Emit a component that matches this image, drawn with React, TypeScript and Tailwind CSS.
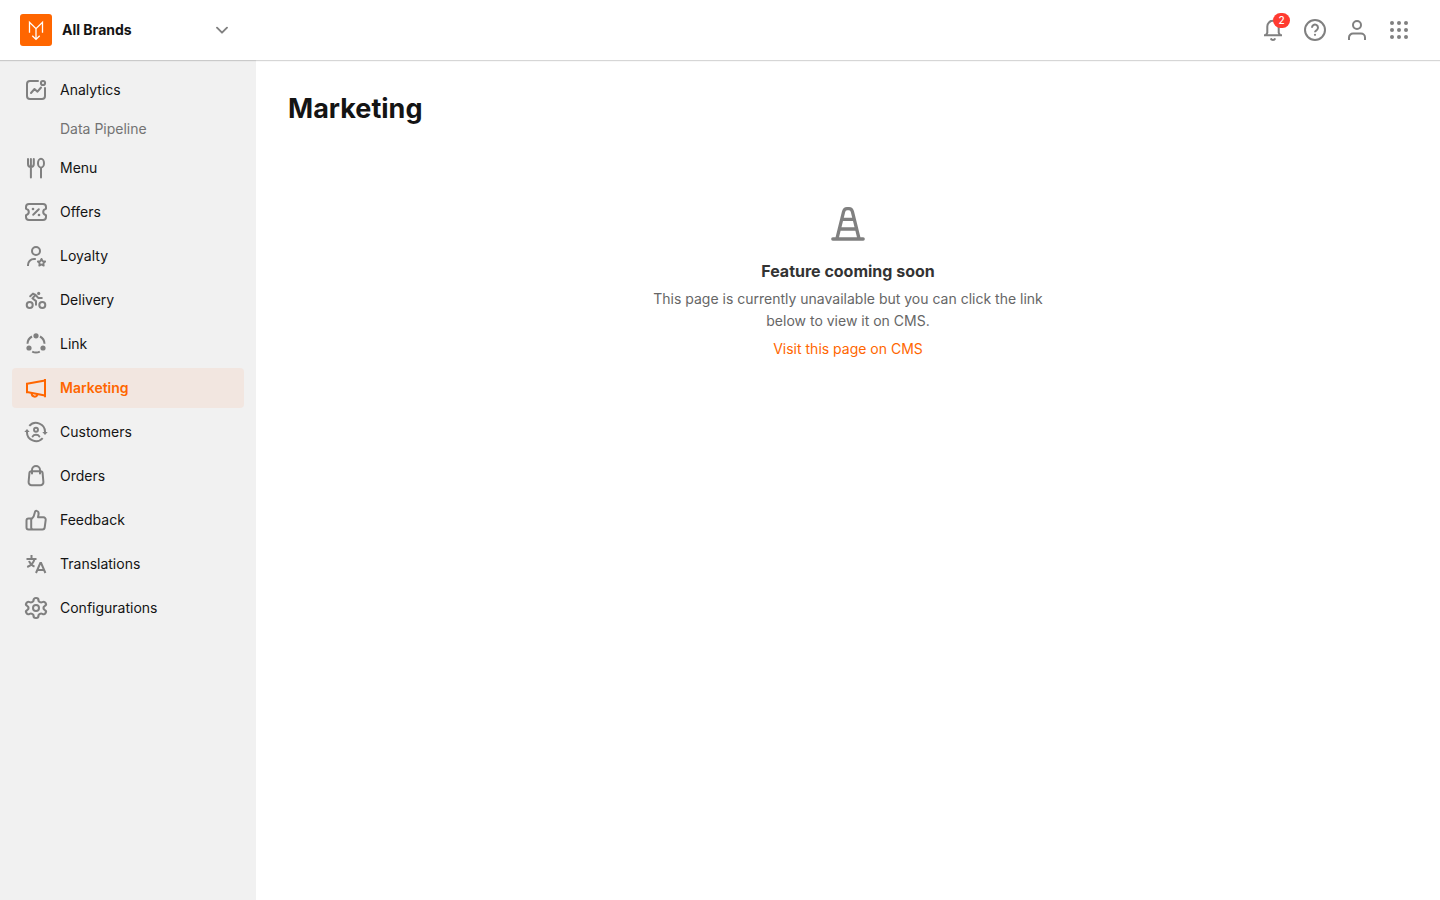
import type { ReactNode } from "react";

function Icon({ children, className = "size-6" }: { children: ReactNode; className?: string }) {
  return (
    <svg
      viewBox="0 0 24 24"
      fill="none"
      stroke="currentColor"
      strokeWidth="2"
      strokeLinecap="round"
      strokeLinejoin="round"
      aria-hidden="true"
      className={`shrink-0 ${className}`}
    >
      {children}
    </svg>
  );
}

type NavItem = { label: string; icon: ReactNode; active?: boolean; children?: string[] };

const NAV: NavItem[] = [
  {
    label: "Analytics",
    children: ["Data Pipeline"],
    icon: (
      <>
        <path d="M14 3H6a3 3 0 0 0-3 3v12a3 3 0 0 0 3 3h12a3 3 0 0 0 3-3v-8" />
        <circle cx="19" cy="5" r="2.1" />
        <path d="m7 15 3.5-4 3 2.7L17 9.5" />
      </>
    ),
  },
  {
    label: "Menu",
    icon: (
      <>
        <path d="M4 3v5a2.9 2.9 0 0 0 5.8 0V3M6.9 3v18.5" />
        <ellipse cx="17" cy="7.2" rx="3" ry="4.4" />
        <path d="M17 12v9.5" />
      </>
    ),
  },
  {
    label: "Offers",
    icon: (
      <>
        <path d="M5 4h14a3 3 0 0 1 3 3v1.8c-2 .6-2.8 1.8-2.8 3.2s.8 2.6 2.8 3.2V17a3 3 0 0 1-3 3H5a3 3 0 0 1-3-3v-1.8c2-.6 2.8-1.8 2.8-3.2S4 9.4 2 8.8V7a3 3 0 0 1 3-3Z" />
        <path d="m9.2 14.8 5.6-5.6" />
        <circle cx="9" cy="9" r="1.3" fill="currentColor" stroke="none" />
        <circle cx="15" cy="15" r="1.3" fill="currentColor" stroke="none" />
      </>
    ),
  },
  {
    label: "Loyalty",
    icon: (
      <>
        <circle cx="12" cy="7" r="4" />
        <path strokeLinecap="butt" d="M4 22v-1a6 6 0 0 1 6-6h1.8" />
        <path
          strokeWidth="1.9"
          d="m17.5 14.9 1.1 2.2 2.5.4-1.8 1.7.4 2.4-2.2-1.1-2.2 1.1.4-2.4-1.8-1.7 2.5-.4Z"
        />
      </>
    ),
  },
  {
    label: "Delivery",
    icon: (
      <>
        <circle cx="5.7" cy="17" r="3" />
        <circle cx="18.3" cy="17" r="3" />
        <circle cx="14.7" cy="5.4" r="1.6" fill="currentColor" stroke="none" />
        <path d="M6.2 8.3 9 5.6l2.6 1.2-3.2 3.5 3.6 2.8v3.6M11.8 7.2l2.7 2.9h3.3" />
      </>
    ),
  },
  {
    label: "Link",
    icon: (
      <>
        <circle cx="12" cy="3.8" r="2.6" fill="currentColor" stroke="none" />
        <circle cx="5" cy="16" r="2.6" fill="currentColor" stroke="none" />
        <circle cx="19" cy="16" r="2.6" fill="currentColor" stroke="none" />
        <path
          strokeLinecap="butt"
          d="M3.5 11.8A8.5 8.5 0 0 1 8 4.500M16 4.500a8.5 8.5 0 0 1 4.500 7.300M8.200 19.600a8.500 8.500 0 0 0 7.600 0"
        />
      </>
    ),
  },
  {
    label: "Marketing",
    active: true,
    icon: (
      <>
        <path strokeLinecap="butt" d="M3 6.7v10.6M21 3v18.3M3 7.8l18-3.4M3 16.1l18 3.4" />
        <path d="M7.700 17.600a3 3 0 0 0 5.800 1.100" />
      </>
    ),
  },
  {
    label: "Customers",
    icon: (
      <>
        <path strokeLinecap="butt" d="M5.3 5.9A9 9 0 0 1 21 12.3M18.7 18.1A9 9 0 0 1 3 11.7" />
        <path d="M18.300 12h5.400L21 15ZM.3 12h5.400L3 9Z" fill="currentColor" stroke="none" />
        <circle strokeWidth="1.900" cx="12" cy="9.700" r="2" />
        <path strokeWidth="1.900" d="M8.600 16.400c.6-1 1.800-1.600 3.400-1.600s2.800.6 3.400 1.600" />
      </>
    ),
  },
  {
    label: "Orders",
    icon: (
      <>
        <path d="M7.4 7.2h9.2a2 2 0 0 1 2 1.8l.8 9a3 3 0 0 1-3 3.2H7.6a3 3 0 0 1-3-3.2l.8-9a2 2 0 0 1 2-1.8Z" />
        <path d="M8 9.5V6a4 4 0 0 1 8 0v3.5" />
      </>
    ),
  },
  {
    label: "Feedback",
    icon: (
      <path d="M7.2 11.6c2-1.7 3.2-4.2 3.6-7 .2-1.4 1-2 1.9-1.7 1.5.4 2.2 2 1.8 3.8L14 9.3h5.5a2.2 2.2 0 0 1 2.2 2.5l-1 7.6a2.2 2.2 0 0 1-2.2 2H9.2a2 2 0 0 1-2-2ZM7.2 10.5H4.5a2 2 0 0 0-2 2v6.9a2 2 0 0 0 2 2h4.7" />
    ),
  },
  {
    label: "Translations",
    icon: (
      <>
        <path strokeLinecap="butt" d="M2.5 7h10M7.5 3v4M10.5 7c-.8 3.5-3.3 6.4-7.3 8M5 9c1 2.5 2.8 4.5 5.5 5.7" />
        <path strokeLinecap="butt" strokeLinejoin="miter" d="m12 21 4.3-10h.8l4.3 10M13.5 18h6.4" />
      </>
    ),
  },
  {
    label: "Configurations",
    icon: (
      <>
        <path
          transform="translate(12 12) scale(1.1 1) translate(-12 -12)"
          d="M12.22 2h-.44a2 2 0 0 0-2 2v.18a2 2 0 0 1-1 1.73l-.43.25a2 2 0 0 1-2 0l-.15-.08a2 2 0 0 0-2.73.73l-.22.38a2 2 0 0 0 .73 2.73l.15.1a2 2 0 0 1 1 1.72v.51a2 2 0 0 1-1 1.74l-.15.09a2 2 0 0 0-.73 2.73l.22.38a2 2 0 0 0 2.73.73l.15-.08a2 2 0 0 1 2 0l.43.25a2 2 0 0 1 1 1.73V20a2 2 0 0 0 2 2h.44a2 2 0 0 0 2-2v-.18a2 2 0 0 1 1-1.73l.43-.25a2 2 0 0 1 2 0l.15.08a2 2 0 0 0 2.73-.73l.22-.39a2 2 0 0 0-.73-2.73l-.15-.08a2 2 0 0 1-1-1.74v-.5a2 2 0 0 1 1-1.74l.15-.09a2 2 0 0 0 .73-2.73l-.22-.38a2 2 0 0 0-2.73-.73l-.15.08a2 2 0 0 1-2 0l-.43-.25a2 2 0 0 1-1-1.73V4a2 2 0 0 0-2-2z"
        />
        <circle cx="12" cy="12" r="3" />
      </>
    ),
  },
];

function Header() {
  return (
    <header className="relative z-10 flex h-15 shrink-0 items-center justify-between bg-white pr-[29px] pl-5 shadow-[0_1px_1px_rgba(0,0,0,0.16)]">
      <button type="button" className="flex w-[212px] items-center text-left">
        <svg viewBox="0 0 32 32" fill="none" aria-hidden="true" className="size-8 shrink-0">
          <rect width="32" height="32" rx="3" fill="#ff6600" />
          <path
            d="M9.5 18.8V8.2l6.5 6.5 6.5-6.5v10.6M16 14.7v10.5M12.3 21.7l3.7 3.7 3.7-3.7"
            stroke="#fff"
            strokeWidth="1.3"
          />
        </svg>
        <span className="ml-2.5 flex-1 text-sm font-bold text-[#141414]">All Brands</span>
        <Icon className="size-5 text-[#808080]">
          <path strokeWidth="2.3" d="m6 9.2 6 6 6-6" />
        </Icon>
      </button>

      <div className="flex items-center gap-[18px] text-[#808080]">
        <button type="button" aria-label="Notifications" className="relative">
          <Icon>
            <path
              strokeLinecap="butt"
              strokeLinejoin="miter"
              d="M3 17.2h18M5 17l1.3-2.3V8.5a5.7 5.7 0 0 1 11.4 0v6.2L19 17M9.8 20.3c.4 1.1 1.2 1.6 2.2 1.6s1.8-.5 2.2-1.6"
            />
          </Icon>
          <span className="absolute -top-[5px] left-3 flex h-[15px] w-[17px] items-center justify-center rounded-full bg-[#ff3b30] text-[10px] font-medium text-white">
            2
          </span>
        </button>
        <button type="button" aria-label="Help">
          <Icon>
            <circle cx="12" cy="12" r="10" />
            <path strokeLinecap="butt" d="M9 9.8a3 3 0 1 1 4.7 2.3c-1.1.7-1.7 1.1-1.7 2.2" />
            <circle cx="12" cy="16.8" r="1.1" fill="currentColor" stroke="none" />
          </Icon>
        </button>
        <button type="button" aria-label="Account">
          <Icon>
            <circle cx="12" cy="7" r="4" />
            <path strokeLinecap="butt" d="M4 22v-2.5a4 4 0 0 1 4-4h8a4 4 0 0 1 4 4V22" />
          </Icon>
        </button>
        <button type="button" aria-label="Apps">
          <Icon>
            {[5, 12, 19].map((cy) =>
              [5, 12, 19].map((cx) => (
                <circle key={`${cx}-${cy}`} cx={cx} cy={cy} r="2" fill="currentColor" stroke="none" />
              )),
            )}
          </Icon>
        </button>
      </div>
    </header>
  );
}

function Sidebar() {
  return (
    <nav aria-label="Main" className="w-64 shrink-0 bg-[#f1f1f1] px-3 pt-2.5">
      <ul className="flex flex-col gap-1">
        {NAV.map((item) => (
          <li key={item.label}>
            <a
              href="#"
              aria-current={item.active ? "page" : undefined}
              className={
                item.active
                  ? "flex h-10 items-center gap-3 rounded bg-[#f2e6e0] px-3 text-sm font-semibold text-[#ff6600]"
                  : "flex h-10 items-center gap-3 rounded px-3 text-sm text-[#141414]"
              }
            >
              <span className={item.active ? "text-[#ff6600]" : "text-[#808080]"}>
                <Icon>{item.icon}</Icon>
              </span>
              {item.label}
            </a>
            {item.children && (
              <ul className="pt-1">
                {item.children.map((child) => (
                  <li key={child}>
                    <a href="#" className="flex h-[30px] items-center pl-12 text-sm text-[#737373]">
                      {child}
                    </a>
                  </li>
                ))}
              </ul>
            )}
          </li>
        ))}
      </ul>
    </nav>
  );
}

export default function App() {
  return (
    <div className="flex min-h-screen flex-col bg-white font-['Inter','Liberation_Sans',sans-serif]">
      <Header />
      <div className="flex flex-1">
        <Sidebar />
        <main className="flex-1 px-8 pt-7">
          <h1 className="text-[27px] leading-[42px] font-bold text-[#141414]">Marketing</h1>
          <section className="mx-auto mt-[74px] flex max-w-[400px] flex-col items-center text-center">
            <svg
              viewBox="0 0 40 40"
              fill="none"
              stroke="#808080"
              strokeWidth="3.3"
              strokeLinecap="round"
              strokeLinejoin="round"
              aria-hidden="true"
              className="size-10"
            >
              <path d="M4.8 35h30.4M9 34.5l6.6-26.8C16.1 5.7 17.3 4.7 19 4.7h2c1.7 0 2.9 1 3.4 3L31 34.5M14 15.3h12M11.7 25h16.6" />
            </svg>
            <h2 className="mt-4 text-base leading-[22px] font-bold text-[#333333]">Feature cooming soon</h2>
            <p className="mt-1.5 text-sm leading-[22px] text-[#666666]">
              This page is currently unavailable but you can click the link below to view it on CMS.
            </p>
            <a href="#" className="mt-1.5 text-sm leading-[22px] text-[#ff6600]">
              Visit this page on CMS
            </a>
          </section>
        </main>
      </div>
    </div>
  );
}
